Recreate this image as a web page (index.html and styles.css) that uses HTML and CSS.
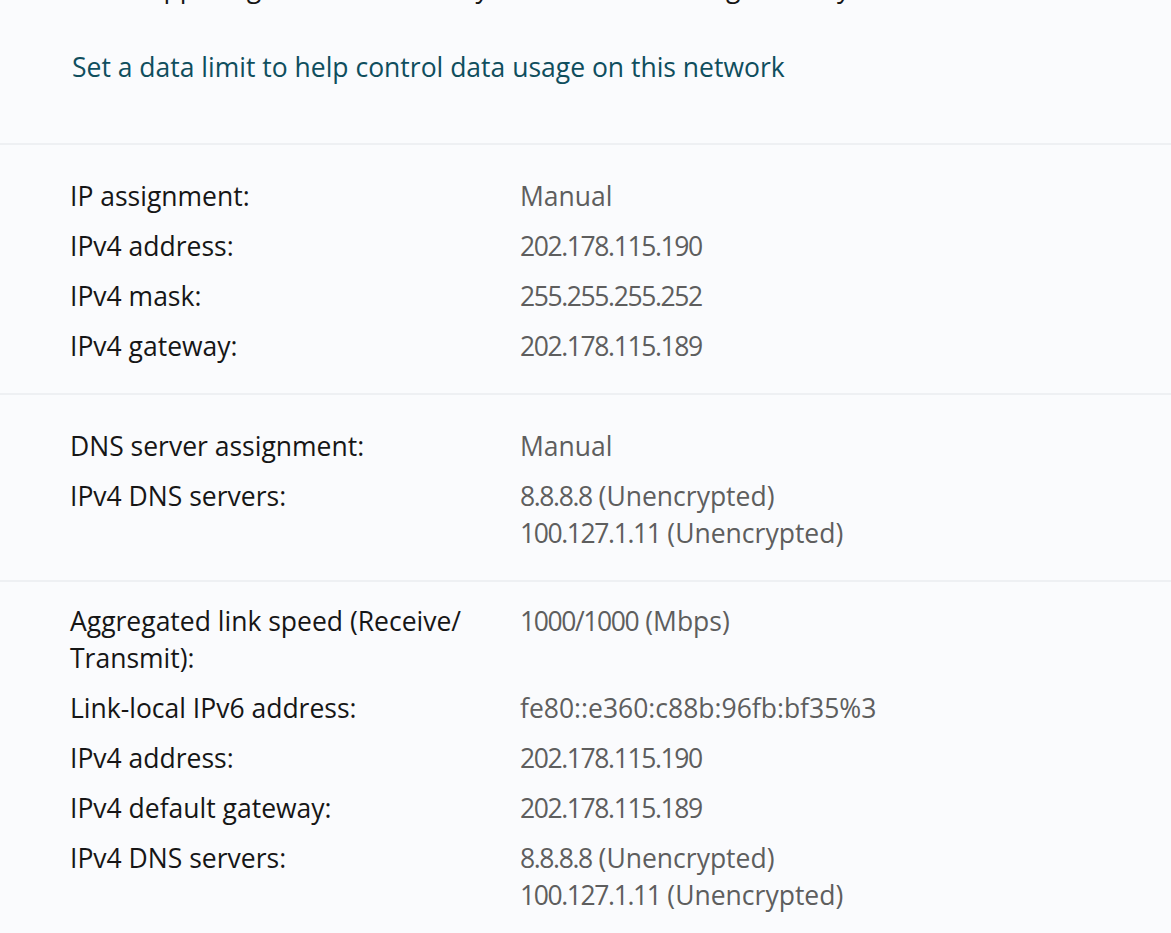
FILE: index.html
```html
<!DOCTYPE html>
<html lang="en">
<head>
<meta charset="utf-8">
<title>Network properties</title>
<link rel="stylesheet" href="styles.css">
</head>
<body>
<div class="page">
  <div class="header">
    <p class="intro">Some apps might work differently to reduce data usage when you're connected to this network</p>
    <p class="link">Set a data limit to help control data usage on this network</p>
  </div>

  <section class="group">
    <div class="row"><div class="label">IP assignment:</div><div class="value">Manual</div></div>
    <div class="row"><div class="label">IPv4 address:</div><div class="value"><span class="num">202.178.115.190</span></div></div>
    <div class="row"><div class="label">IPv4 mask:</div><div class="value"><span class="num">255.255.255.252</span></div></div>
    <div class="row"><div class="label">IPv4 gateway:</div><div class="value"><span class="num">202.178.115.189</span></div></div>
  </section>

  <section class="group">
    <div class="row"><div class="label">DNS server assignment:</div><div class="value">Manual</div></div>
    <div class="row"><div class="label">IPv4 DNS servers:</div><div class="value"><span class="num">8.8.8.8</span> (Unencrypted)<br><span class="num">100.127.1.11</span> (Unencrypted)</div></div>
  </section>

  <section class="group group-tight">
    <div class="row"><div class="label">Aggregated link speed (Receive/<wbr>Transmit):</div><div class="value"><span class="num">1000/1000</span> (Mbps)</div></div>
    <div class="row"><div class="label">Link-local IPv6 address:</div><div class="value">fe80::e360:c88b:96fb:bf35%3</div></div>
    <div class="row"><div class="label">IPv4 address:</div><div class="value"><span class="num">202.178.115.190</span></div></div>
    <div class="row"><div class="label">IPv4 default gateway:</div><div class="value"><span class="num">202.178.115.189</span></div></div>
    <div class="row"><div class="label">IPv4 DNS servers:</div><div class="value"><span class="num">8.8.8.8</span> (Unencrypted)<br><span class="num">100.127.1.11</span> (Unencrypted)</div></div>
  </section>
</div>
</body>
</html>
```

FILE: styles.css
```css
html, body {
  margin: 0;
  padding: 0;
  background: #fafbfd;
}

body {
  font-family: "Open Sans", "Noto Sans", "Liberation Sans", sans-serif;
  font-size: 26.5px;
  line-height: 37px;
  color: #161616;
  overflow: hidden;
  height: 933px;
}

.page {
  display: flex;
  flex-direction: column;
  overflow: hidden;
}

.header {
  padding: 0 0 57px 72px;
  border-bottom: 2px solid #eef0f3;
  overflow: hidden;
}

.intro {
  margin: -31px 0 0 0;
  color: #161616;
  white-space: nowrap;
}

.link {
  margin: 43px 0 0 0;
  color: #0f4e5d;
}

.group {
  display: flex;
  flex-direction: column;
  gap: 13px;
  padding: 33px 0 28px 70px;
  border-bottom: 2px solid #eef0f3;
}

.group-tight {
  padding-top: 21px;
  border-bottom: none;
}

.row {
  display: grid;
  grid-template-columns: 450px 1fr;
}

.label {
  padding-right: 20px;
  color: #161616;
}

.value {
  color: #5e5e5e;
}

.num {
  letter-spacing: -1.4px;
}
```
